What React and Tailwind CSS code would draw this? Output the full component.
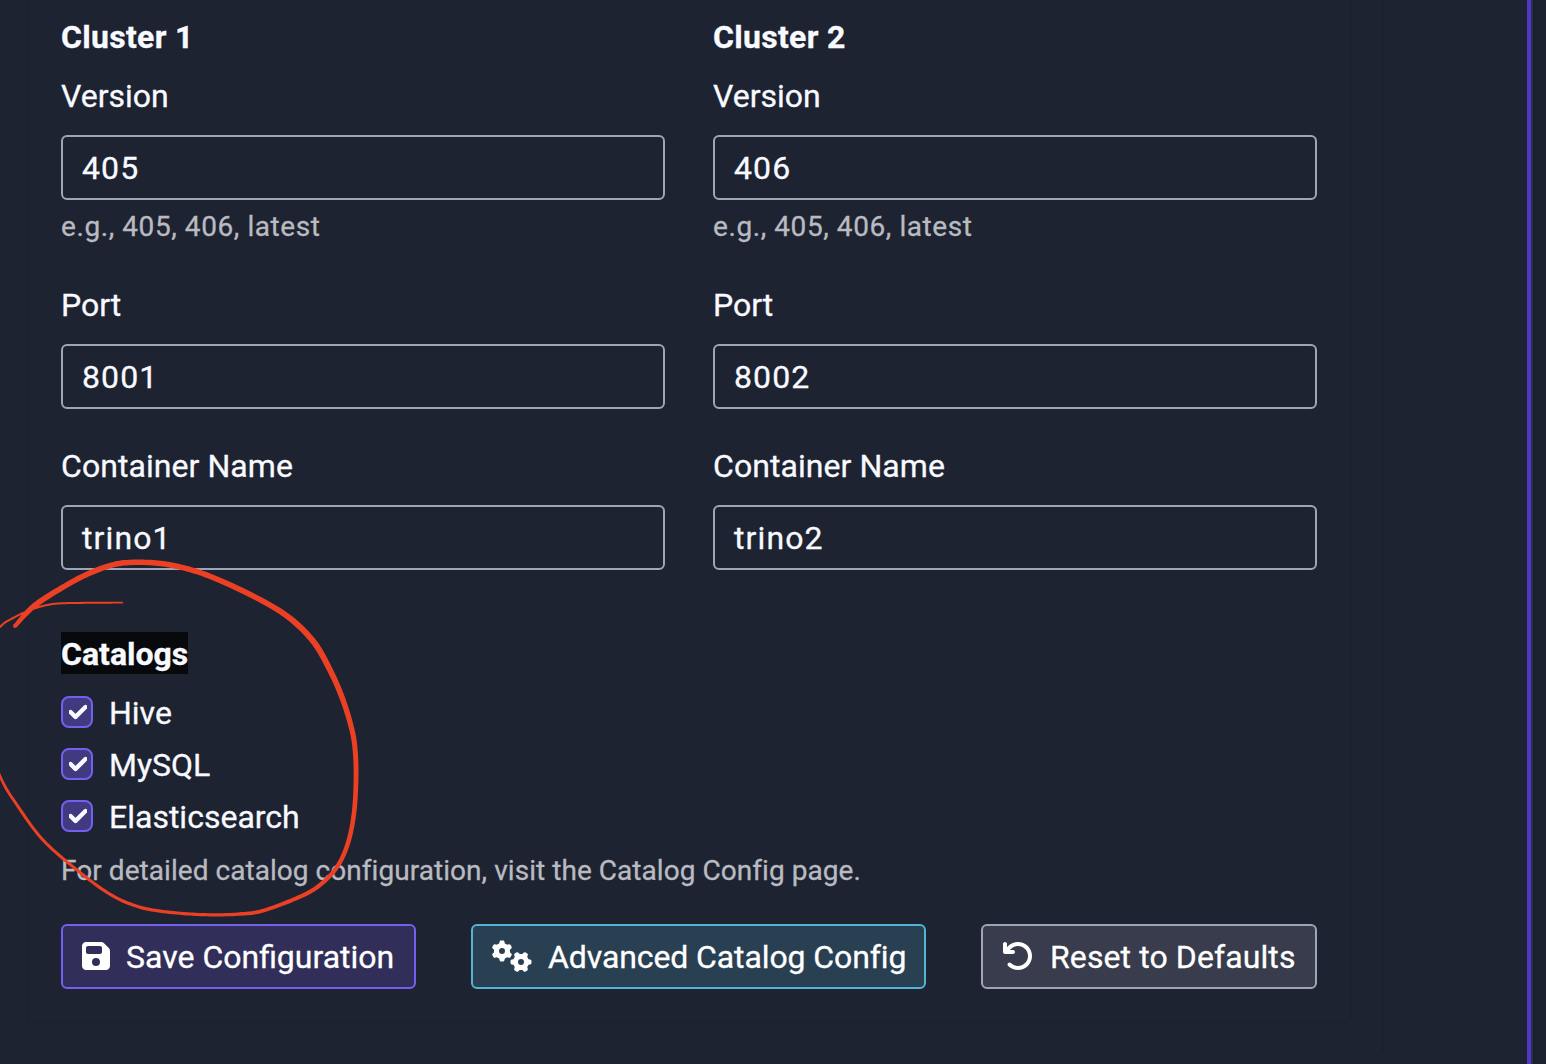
import { FaFloppyDisk, FaGears, FaArrowRotateLeft, FaCheck } from "react-icons/fa6";

// Brush stroke samples: x, y, width
const STROKE = [
  [15, 626, 4], [34, 606, 5.5], [65, 586, 5.5], [90, 573, 5.5], [115, 564.3, 5.5], [138, 562.3, 5.5], [163, 563.8, 5.5], [188, 569, 5.5],
  [213, 577.5, 5.5], [253, 596, 5.5], [287, 616, 5.8], [313, 641, 6], [330, 670, 5.8], [343, 700, 5.5], [352, 730, 5.2], [355.3, 752, 5],
  [356, 780, 4.8], [354, 813, 4.6], [348, 843, 4.5], [337, 867, 4.3], [320, 885, 4.2], [300, 896.7, 4], [263, 910.7, 3.8], [240, 914, 3.4],
  [215, 914.8, 3.2], [190, 914, 3.2], [157, 910.7, 3.2], [133, 905, 3.2], [108, 893, 3.2], [77, 870, 3], [43, 840, 3], [17, 805, 3], [0, 776, 2.6],
  [-20, 720, 2], [-18, 650, 2], [0, 627, 2], [13, 618, 2], [33, 609, 2], [53, 604, 2], [75, 603, 2], [100, 602.8, 2], [123, 602.6, 1.6],
];

function brushOutline(pts) {
  const c = [];
  for (let i = 0; i < pts.length - 1; i++) {
    const [a, b, d, e] = [pts[Math.max(i - 1, 0)], pts[i], pts[i + 1], pts[Math.min(i + 2, pts.length - 1)]];
    for (let t = 0; t < 1; t += 0.1) {
      c.push([0, 1, 2].map((k) => 0.5 * (2 * b[k] + (d[k] - a[k]) * t + (2 * a[k] - 5 * b[k] + 4 * d[k] - e[k]) * t * t + (3 * b[k] - a[k] - 3 * d[k] + e[k]) * t * t * t)));
    }
  }
  c.push(pts[pts.length - 1]);
  const side = (s) => c.map((p, i) => {
    const u = c[Math.max(i - 1, 0)], v = c[Math.min(i + 1, c.length - 1)];
    const dx = v[0] - u[0], dy = v[1] - u[1], l = Math.hypot(dx, dy) || 1;
    return `${(p[0] - (s * dy * p[2]) / 2 / l).toFixed(2)},${(p[1] + (s * dx * p[2]) / 2 / l).toFixed(2)}`;
  });
  return "M" + [...side(1), ...side(-1).reverse()].join("L") + "Z";
}

function Input({ value }) {
  return (
    <div className="flex h-[65px] items-center rounded-[6px] border-2 border-[#9fa5b9] px-[19px] tracking-[1.1px]">
      <span>{value}</span>
    </div>
  );
}

function Cluster({ n, version, port, name }) {
  return (
    <div className="w-[604px]">
      <h3 className="leading-[48px] font-bold tracking-[0.3px]">Cluster {n}</h3>
      <div className="mt-[11px] mb-[15px] leading-[48px]">Version</div>
      <Input value={version} />
      <div className="mt-[6px] text-[28px] leading-[42px] tracking-[0.58px] text-[#b9bbc0]">e.g., 405, 406, latest</div>
      <div className="mt-[33px] mb-[15px] leading-[48px]">Port</div>
      <Input value={port} />
      <div className="mt-[33px] mb-[15px] leading-[48px] tracking-[0.06px]">Container Name</div>
      <Input value={name} />
    </div>
  );
}

function Catalog({ name }) {
  return (
    <div className="flex h-12 items-center">
      <span className="relative -top-px mr-4 flex h-8 w-8 items-center justify-center rounded-lg border-2 border-[#7460ee] bg-[#423a80]">
        <FaCheck className="ml-px h-5 w-[18px] stroke-current stroke-[48]" />
      </span>
      <span>{name}</span>
    </div>
  );
}

export default function App() {
  return (
    <div className="relative flex h-[1064px] w-[1546px] overflow-hidden bg-[#1e2332] font-['Roboto',sans-serif] text-[32px] text-[#f8faff] [-webkit-text-stroke:0.3px]">
      <main className="w-[1527px]">
        <div className="-mt-2 -ml-2 h-[1065px] w-[1392px] rounded-lg border-2 border-[#1c212f] pl-[32px]">
          <div className="h-[1029px] w-[1326px] rounded-lg border-2 border-[#1c212f] pt-[17px] pl-[33px]">
            <div className="flex gap-12">
              <Cluster n={1} version="405" port="8001" name="trino1" />
              <Cluster n={2} version="406" port="8002" name="trino2" />
            </div>
            <h3 className="mt-[60px] leading-[48px] font-bold">
              <span className="bg-[#08090c] pt-[3px] pb-px">Catalogs</span>
            </h3>
            <div className="mt-[11px] flex flex-col gap-1">
              <Catalog name="Hive" />
              <Catalog name="MySQL" />
              <Catalog name="Elasticsearch" />
            </div>
            <p className="mt-[9px] text-[28px] leading-[42px] tracking-[0.05px] text-[#b9bbc0]">For detailed catalog configuration, visit the Catalog Config page.</p>
            <div className="mt-8 flex w-[1256px] justify-between text-white">
              <button className="flex h-[65px] w-[355px] items-center rounded-[6px] border-2 border-[#7460ee] bg-[#312f59] pl-[19px]">
                <FaFloppyDisk className="relative -top-px mr-4 h-8 w-[28px]" />
                <span>Save Configuration</span>
              </button>
              <button className="flex h-[65px] w-[455px] items-center rounded-[6px] border-2 border-[#54b4d3] bg-[#294053] pl-[19px]">
                <FaGears className="relative -top-px mr-4 h-8 w-10" />
                <span className="tracking-[-0.1px]">Advanced Catalog Config</span>
              </button>
              <button className="flex h-[65px] w-[336px] items-center rounded-[6px] border-2 border-[#9fa5b9] bg-[#383c4c] pl-[19px]">
                <FaArrowRotateLeft className="relative -top-px mr-4 h-8 w-8" />
                <span className="tracking-[0.1px]">Reset to Defaults</span>
              </button>
            </div>
          </div>
        </div>
      </main>
      <div className="w-1 bg-[#4e38c8]" />
      <div className="w-0.5 bg-[#2b3045]" />
      <div className="flex-1 bg-[#1c2130]" />
      <svg className="pointer-events-none absolute inset-0" width="1546" height="1064" viewBox="0 0 1546 1064">
        <circle cx="15" cy="626" r="2" fill="#ec4024" />
        <path d={brushOutline(STROKE)} fill="#ec4024" />
      </svg>
    </div>
  );
}
